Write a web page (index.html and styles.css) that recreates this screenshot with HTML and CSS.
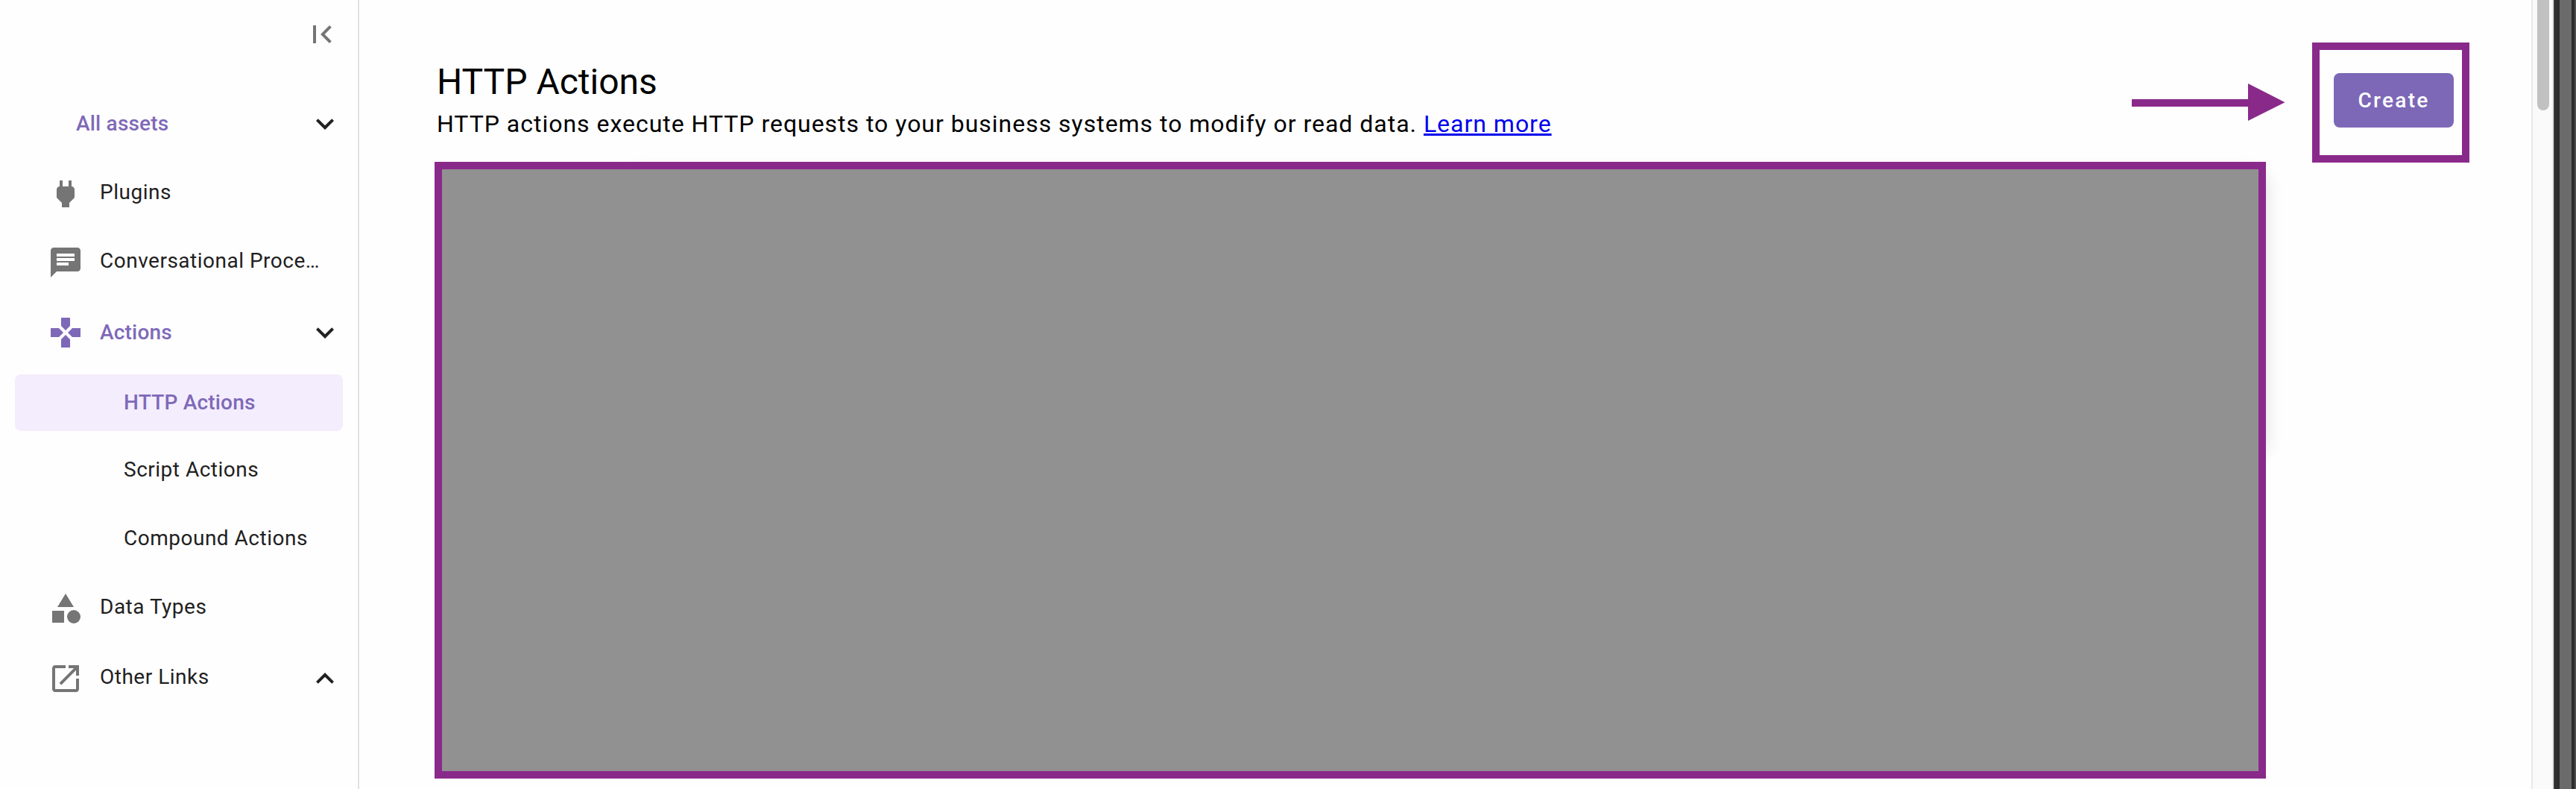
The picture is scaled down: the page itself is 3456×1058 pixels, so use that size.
FILE: index.html
```html
<!DOCTYPE html>
<html lang="en">
<head>
<meta charset="utf-8">
<title>HTTP Actions</title>
<link rel="stylesheet" href="styles.css">
</head>
<body>
<div class="app">
  <nav class="sidebar">
    <div class="collapse"><svg class="icon muted" viewBox="0 0 24 24"><path d="M18.41 16.59L13.82 12l4.59-4.59L17 6l-6 6 6 6zM6 6h2v12H6z"/></svg></div>
    <div class="row all current"><span class="label">All assets</span><svg class="icon chevron" viewBox="0 0 24 24"><path d="M16.59 8.59L12 13.17 7.41 8.59 6 10l6 6 6-6z"/></svg></div>
    <div class="row plugins"><svg class="icon muted" viewBox="0 0 24 24"><path d="M16.01 7L16 3h-2v4h-4V3H8v4h-.01C7 6.99 6 7.99 6 8.99v5.49L9.5 18v3h5v-3l3.5-3.51v-5.5c0-1-1-2-1.99-1.99z"/></svg><span class="label">Plugins</span></div>
    <div class="row processes"><svg class="icon muted" viewBox="0 0 24 24"><path d="M20 2H4c-1.1 0-1.99.9-1.99 2L2 22l4-4h14c1.1 0 2-.9 2-2V4c0-1.1-.9-2-2-2zM6 9h12v2H6V9zm8 5H6v-2h8v2zm4-6H6V6h12v2z"/></svg><span class="label">Conversational Proce…</span></div>
    <div class="row actions current"><svg class="icon" viewBox="0 0 24 24"><path d="M15 7.5V2H9v5.5l3 3 3-3zM7.5 9H2v6h5.5l3-3-3-3zM9 16.5V22h6v-5.5l-3-3-3 3zM16.5 9l-3 3 3 3H22V9h-5.5z"/></svg><span class="label">Actions</span><svg class="icon chevron" viewBox="0 0 24 24"><path d="M16.59 8.59L12 13.17 7.41 8.59 6 10l6 6 6-6z"/></svg></div>
    <div class="row sub selected current"><span class="label">HTTP Actions</span></div>
    <div class="row sub script"><span class="label">Script Actions</span></div>
    <div class="row sub compound"><span class="label">Compound Actions</span></div>
    <div class="row types"><svg class="icon muted" viewBox="0 0 24 24"><path d="M12 2l-5.5 9h11zM3 13.5h8v8H3z"/><circle cx="17.5" cy="17.5" r="4.5"/></svg><span class="label">Data Types</span></div>
    <div class="row links"><svg class="icon muted" viewBox="0 0 24 24"><path d="M19 19H5V5h7V3H5c-1.11 0-2 .9-2 2v14c0 1.1.89 2 2 2h14c1.1 0 2-.9 2-2v-7h-2v7zM14 3v2h3.59l-9.83 9.83 1.41 1.41L19 6.41V10h2V3h-7z"/></svg><span class="label">Other Links</span><svg class="icon chevron" viewBox="0 0 24 24"><path d="M12 8l-6 6 1.41 1.41L12 10.83l4.59 4.58L18 14z"/></svg></div>
  </nav>
  <main class="content">
    <div class="primary">
      <header class="heading">
        <div class="intro">
          <h1>HTTP Actions</h1>
          <p>HTTP actions execute HTTP requests to your business systems to modify or read data. <a href="#">Learn more</a></p>
        </div>
        <svg class="arrow" viewBox="0 0 206 50"><path d="M0 21h156V0l49.500 25.250L156 50V31H0z"/></svg>
      </header>
      <div class="panel"></div>
    </div>
    <div class="callout"><button class="create">Create</button></div>
  </main>
  <div class="track"><div class="thumb"></div></div>
  <div class="edge"></div>
</div>
</body>
</html>
```
FILE: styles.css
```css
* { box-sizing: border-box; }
html, body { margin: 0; height: 100%; overflow: hidden; }
body { background: #fefefe; font-family: Roboto, "Liberation Sans", sans-serif; color: #000; }
.app { display: flex; width: 3456px; height: 1058px; }
.sidebar { width: 482px; flex: none; display: flex; flex-direction: column; padding: 0 20px; border-right: 2px solid #e0e0e0; color: #212121; font-size: 28px; letter-spacing: 0.5px; }
.icon { width: 48px; height: 48px; flex: none; fill: currentColor; }
.muted { color: #757575; }
.collapse { display: flex; justify-content: flex-end; height: 128px; padding: 22px 4px 0 0; }
.row { display: flex; flex: none; align-items: flex-start; height: 92px; padding-left: 44px; }
.label { flex: 1; line-height: 32px; margin-left: 22px; white-space: nowrap; }
.current { color: #7e69b8; font-weight: 500; letter-spacing: 0.2px; }
.chevron { color: #212121; }
.all { padding-top: 14px; padding-left: 60px; }
.all .label { padding-top: 8px; }
.plugins, .processes { padding-top: 16px; }
.plugins .label, .processes .label { padding-top: 6px; }
.actions { height: 98px; padding-top: 18px; }
.actions .label { padding-top: 8px; }
.sub { padding-left: 124px; }
.selected { height: 76px; padding-top: 22px; border-radius: 8px; background: #f4edfd; }
.script, .compound { padding-top: 36px; }
.types { height: 94px; padding-top: 30px; }
.links { padding-top: 30px; }
.types .label, .links .label { padding-top: 6px; }
.content { flex: 1; display: flex; align-items: flex-start; padding-left: 101px; }
.primary { width: 2457px; flex: none; }
.heading { display: flex; justify-content: space-between; height: 217px; padding: 82px 0 0 3px; }
.arrow { width: 206px; height: 50px; margin: 30px -26px 0 0; fill: #892a8b; }
h1 { margin: 0; font-size: 48px; line-height: 56px; font-weight: 400; }
p { margin: 9px 0 0; font-size: 32px; line-height: 38px; letter-spacing: 0.98px; white-space: nowrap; }
a { color: #0000ee; text-decoration: underline; }
.panel { position: relative; height: 827px; border: 10px solid #892a8b; background: #919191; }
/* soft card shadow behind the upper right side of the panel */
.panel::before { content: ""; position: absolute; z-index: -1; top: 4px; right: -8px; width: 2200px; height: 372px; border-radius: 8px; box-shadow: 0 2px 24px rgba(0, 0, 0, 0.16); }
.callout { width: 211px; height: 161px; margin: 57px 0 0 62px; padding: 31px 0 0 19px; border: 10px solid #892a8b; }
.create { display: block; width: 161px; height: 73px; padding: 0; border: 0; border-radius: 8px; background: #7c68b7; color: #fff; font: 500 28px/73px Roboto, sans-serif; letter-spacing: 2.3px; text-align: center; }
.track { flex: none; width: 30px; padding-left: 6px; border: solid #e8e8e8; border-width: 0 2px; background: #fafafa; }
.thumb { width: 16px; height: 148px; border-radius: 0 0 8px 8px; background: #c1c1c1; }
.edge { flex: none; width: 30px; background: linear-gradient(90deg, #3b3b3b 2px, #2d2d2d 2px 8px, #6b6b6b 8px 24px, #2d2d2d 24px 28px, #4d4d4d 28px); }
```
